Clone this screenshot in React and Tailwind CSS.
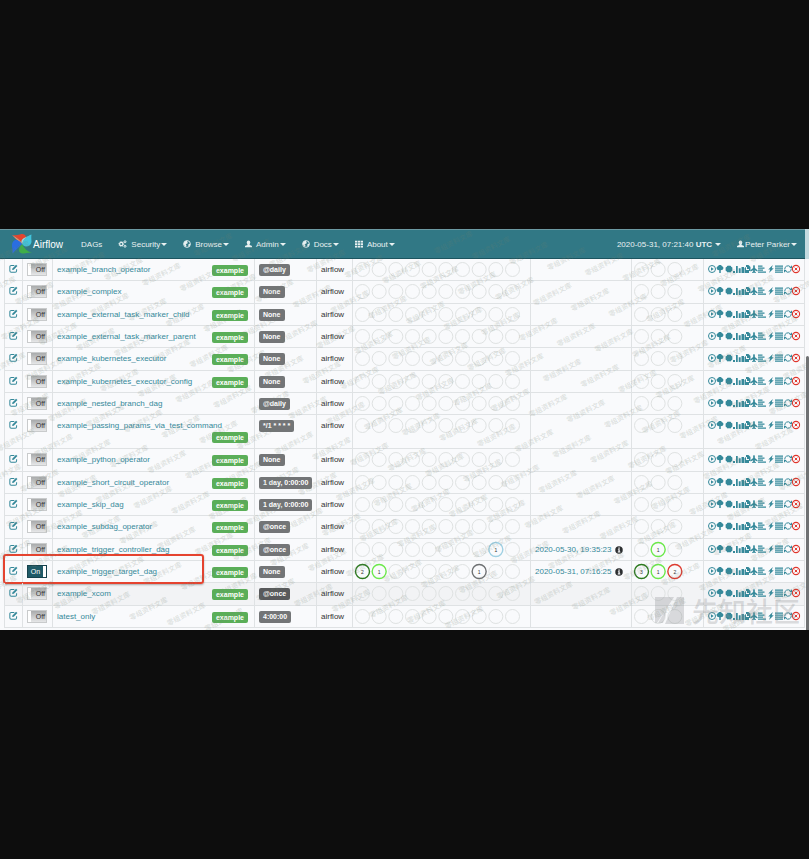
import React from "react";

const DAGS = [
  { name: "example_branch_operator", tag: true, schedule: "@daily" },
  { name: "example_complex", tag: true, schedule: "None" },
  { name: "example_external_task_marker_child", tag: true, schedule: "None" },
  { name: "example_external_task_marker_parent", tag: true, schedule: "None" },
  { name: "example_kubernetes_executor", tag: true, schedule: "None" },
  { name: "example_kubernetes_executor_config", tag: true, schedule: "None" },
  { name: "example_nested_branch_dag", tag: false, schedule: "@daily" },
  { name: "example_passing_params_via_test_command", tag: true, schedule: "*/1 * * * *" },
  { name: "example_python_operator", tag: true, schedule: "None" },
  { name: "example_short_circuit_operator", tag: true, schedule: "1 day, 0:00:00" },
  { name: "example_skip_dag", tag: true, schedule: "1 day, 0:00:00" },
  { name: "example_subdag_operator", tag: true, schedule: "@once" },
  {
    name: "example_trigger_controller_dag",
    tag: true,
    schedule: "@once",
    tasks: { 8: [1, "#9fd0e3"] },
    lastRun: "2020-05-30, 19:35:23",
    runs: { 1: [1, "#6be84a"] },
  },
  {
    name: "example_trigger_target_dag",
    tag: true,
    on: true,
    schedule: "None",
    tasks: { 0: [2, "#2c7a1f"], 1: [1, "#6be84a"], 7: [1, "#6d7072"] },
    lastRun: "2020-05-31, 07:16:25",
    runs: { 0: [3, "#2c7a1f"], 1: [1, "#6be84a"], 2: [2, "#dd3b30"] },
  },
  { name: "example_xcom", tag: true, schedule: "@once", hover: true },
  { name: "latest_only", tag: true, schedule: "4:00:00" },
];

// Every third row takes the extra pixel so that the rows average 22.3px.
const TALLER_ROWS = [1, 4, 8, 11, 14];

function Icon({ children, className = "size-2" }) {
  return (
    <svg viewBox="0 0 16 16" className={`block shrink-0 overflow-visible ${className}`} fill="currentColor" aria-hidden="true">
      {children}
    </svg>
  );
}

const EditIcon = () => (
  <Icon className="size-[9px]">
    <path d="M9.500 2.500H4A2.500 2.500 0 0 0 1.500 5v7A2.500 2.500 0 0 0 4 14.500h7a2.500 2.500 0 0 0 2.500-2.500V9.500" fill="none" stroke="currentColor" strokeWidth="1.800" />
    <path d="M6.200 8 12.500 1.200l2.500 2.500-6.500 6.500-3 .6z" />
  </Icon>
);
const CogsIcon = () => (
  <Icon className="h-2 w-[9px]">
    <circle cx="5.500" cy="8" r="3.300" fill="none" stroke="currentColor" strokeWidth="2.400" />
    <circle cx="5.500" cy="8" r="4.900" fill="none" stroke="currentColor" strokeWidth="1.600" strokeDasharray="1.900 1.950" />
    <circle cx="13" cy="3.500" r="2" fill="none" stroke="currentColor" strokeWidth="1.900" />
    <circle cx="13" cy="12.500" r="2" fill="none" stroke="currentColor" strokeWidth="1.900" />
  </Icon>
);
const GlobeIcon = () => (
  <Icon>
    <circle cx="8" cy="8" r="6.800" fill="none" stroke="currentColor" strokeWidth="1.800" />
    <path d="M2 5 5 2l4-.5-1 2.500 2 1.500-2 2-2.500.5L7 10.500 5.500 14 3 11 1.500 8zM10.500 9l3-1.500 1 1-1.500 4-2 1z" />
  </Icon>
);
const UserIcon = () => (
  <Icon className="h-2 w-[7px]">
    <ellipse cx="8" cy="4.800" rx="4" ry="4.600" />
    <path d="M5.500 8h5v2l4.500 1.800c.7.300 1 1 1 1.700v2H0v-2c0-.7.3-1.400 1-1.700L5.500 10z" />
  </Icon>
);
const GridIcon = () => (
  <Icon>
    {[1.5, 6.5, 11.5].map((y) => [0, 5.7, 11.4].map((x) => <rect key={`${x}-${y}`} x={x} y={y} width="4.600" height="3.600" />))}
  </Icon>
);
const InfoIcon = () => (
  <Icon className="size-2 text-[#2c2e30]">
    <path fillRule="evenodd" d="M8 .5a7.500 7.500 0 1 0 0 15 7.500 7.500 0 0 0 0-15zM6.700 3h2.800v2.300H6.700zM5.800 6.500h3.700v4.700h1.200V13H5.500v-1.800h1.300V8.200h-1z" />
  </Icon>
);

const ACTIONS = [
  ["Trigger Dag", (
    <>
      <circle cx="8" cy="8" r="7" fill="none" stroke="currentColor" strokeWidth="2" />
      <path d="M6 4.600 11.500 8 6 11.400z" />
    </>
  )],
  ["Tree View", <path d="M8 0C5.500 0 4.300 1.300 4 2.500 2.200 3 1 4.500 1.200 6.200c.2 2.700 2.300 4.500 5.300 4.500V16h3v-5.300c3 0 5.100-1.800 5.300-4.500C15 4.500 13.800 3 12 2.500 11.700 1.300 10.500 0 8 0z" />],
  ["Graph View", <path d="m8 .5 1.600 1.700 2.300-.7.600 2.300 2.300.6-.7 2.300L15.800 8l-1.700 1.600.7 2.300-2.300.6-.6 2.300-2.300-.7L8 15.500l-1.600-1.400-2.300.7-.6-2.300-2.300-.6.7-2.300L.2 8l1.700-1.300-.7-2.300 2.300-.6.6-2.300 2.300.7z" />],
  ["Tasks Duration", <path d="M0 12h4v4H0zM6 2h3.500v14H6zM11.500 6.500h3.800V16h-3.800z" />],
  ["Task Tries", <path d="M-1 4h5v12h-5zM5 6l3-2V0h5l4 4v8h-3v4H5zM8 4h2v4h4v2H8z" fillRule="evenodd" />],
  ["Landing Times", <path d="M8 0c1.200 0 1.700 1.500 1.700 3v3L15 10.500v2.300L9.700 10.700v2.500l2 1.500V16L8 15.300 4.300 16v-1.300l2-1.500v-2.500L1 12.800v-2.300L6.300 6V3C6.300 1.500 6.800 0 8 0z" />],
  ["Gantt View", <path d="M0 1h9v2.400H0zM0 5h13v2.400H0zM0 9h10v2.400H0zM0 13h16v2.400H0z" />],
  ["Code View", <path d="M11.500 0 2.500 9h4L4 16 13.500 6.500h-4z" />],
  ["Logs", <path d="M0 1h16v2.500H0zM0 5h16v2.500H0zM0 9h16v2.500H0zM0 13h16v2.500H0z" />],
  ["Refresh", (
    <>
      <path d="M1.500 9A6.500 6.500 0 0 1 12.500 3.500M14.500 7A6.500 6.500 0 0 1 3.500 12.500" fill="none" stroke="currentColor" strokeWidth="2" />
      <path d="M10.500 6H16V.5zM5.500 10H0v5.500z" />
    </>
  )],
  ["Delete Dag", (
    <>
      <circle cx="8" cy="8" r="7.200" fill="none" stroke="currentColor" strokeWidth="2.200" />
      <path d="m5.300 5.300 5.400 5.400m0-5.400-5.400 5.400" fill="none" stroke="currentColor" strokeWidth="1.900" />
    </>
  )],
];

function PinwheelLogo() {
  return (
    <svg viewBox="0 0 40 40" className="size-5 shrink-0" aria-hidden="true">
      <path d="M0 2c6 1 11 0 16-1 6-2 11 0 12 5 1 4 0 8-3 11l-5 3C17 12 10 7 0 2z" fill="#e2452f" />
      <path d="M0 2c10 5 17 10 20 18L8 10z" fill="#f58a68" />
      <path d="M39 1c-1 6 0 10 0 15-1 6-6 9-11 9-3 0-6-2-8-5 2-9 9-15 19-19z" fill="#42c5dd" />
      <path d="M39 1C29 5 22 11 20 20c-3-4-1-9 4-12z" fill="#8be0e8" />
      <path d="M40 38c-6-1-11 0-16 1-6 1-10-2-10-7 0-4 2-8 6-12 4 9 11 15 20 18z" fill="#3fae49" />
      <path d="M1 39c1-6-1-11-1-16 0-6 3-11 8-11 5 0 9 4 12 8C15 25 8 31 1 39z" fill="#2a6ee0" />
    </svg>
  );
}

const Caret = () => (
  <span className="mt-px ml-px size-0 border-x-[3px] border-t-[3px] border-x-transparent border-t-current" aria-hidden="true" />
);

function NavItem({ icon, label, caret = true }) {
  return (
    <a href="#" className="flex items-center whitespace-nowrap">
      {icon && <span className="mr-1">{icon}</span>}
      {label}
      {caret && <Caret />}
    </a>
  );
}

function Navbar() {
  return (
    <nav className="flex h-[30px] items-center justify-between border-t border-b border-t-[#6c9aa3] border-b-[#1d5560] bg-[#317885] pr-2 pl-3 text-[#e8f1f2]">
      <div className="flex items-center gap-4">
        <a href="#" className="mr-[2px] flex items-center gap-px text-[10px] text-white">
          <PinwheelLogo />
          Airflow
        </a>
        <NavItem label="DAGs" caret={false} />
        <NavItem icon={<CogsIcon />} label="Security" />
        <NavItem icon={<GlobeIcon />} label="Browse" />
        <NavItem icon={<UserIcon />} label="Admin" />
        <NavItem icon={<GlobeIcon />} label="Docs" />
        <NavItem icon={<GridIcon />} label="About" />
      </div>
      <div className="flex items-center gap-4">
        <a href="#" className="flex items-center gap-[2px] whitespace-nowrap">
          <span>
            2020-05-31, 07:21:40 <b>UTC</b>
          </span>
          <Caret />
        </a>
        <a href="#" className="flex items-center whitespace-nowrap">
          <span className="mr-px">
            <UserIcon />
          </span>
          Peter Parker
          <Caret />
        </a>
      </div>
    </nav>
  );
}

function Toggle({ on, name }) {
  return (
    <label
      className={`relative flex h-[13px] w-5 cursor-pointer items-center overflow-hidden border text-[7px] leading-[11px] ${
        on
          ? "border-[#17434d] bg-[#1f5a67] text-white"
          : "border-[#c9cbcc] bg-linear-to-b from-[#a9abac] to-[#e6e7e8] text-[#333]"
      }`}
    >
      <input type="checkbox" defaultChecked={on} aria-label={name} className="absolute inset-0 appearance-none" />
      {!on && <span className="h-full w-[3px] bg-white" />}
      <span className={`flex-1 ${on ? "text-center" : "pr-px text-right"}`}>{on ? "On" : "Off"}</span>
      {on && <span className="h-full w-[3px] bg-white" />}
    </label>
  );
}

function StatusCircles({ count, active = {} }) {
  const step = 50 / 3;
  return (
    <svg width={count * 17 + 2} height="17" className="block" role="img" aria-label="Task statuses">
      {Array.from({ length: count }, (_, i) => {
        const state = active[i];
        const cx = 8.5 + i * step;
        return (
          <g key={i}>
            <circle cx={cx} cy="8.500" r="7" fill="none" stroke={state ? state[1] : "#dfe2e2"} strokeWidth={state ? 1.4 : 1} />
            {state && (
              <text x={cx} y="10.500" textAnchor="middle" className="fill-[#333] text-[5px]">
                {state[0]}
              </text>
            )}
          </g>
        );
      })}
    </svg>
  );
}

function DagRow({ dag, index }) {
  const height = dag.name.includes("passing_params")
    ? "h-[34px]"
    : TALLER_ROWS.includes(index)
      ? "h-[23px]"
      : "h-[22px]";
  const cell = "border-r border-b border-[#dfe2e4] p-0 align-top";
  return (
    <tr className={`${height} ${dag.hover ? "bg-[#f2f3f5]" : ""}`}>
      <td className={`${cell} relative border-l`}>
        <a href="#" aria-label={`Edit ${dag.name}`} className="mt-[5px] ml-1 block text-[#35899a]">
          <EditIcon />
        </a>
        {dag.on && (
          <span className="pointer-events-none absolute -top-[7px] -left-[2px] h-[30px] w-[201px] rounded-[3px] border-2 border-[#e5432f] shadow-[0_1px_2px_rgba(0,0,0,0.3)]" />
        )}
      </td>
      <td className={cell}>
        <div className="pt-1 pl-1">
          <Toggle on={dag.on} name={dag.name} />
        </div>
      </td>
      <td className={cell}>
        <div className="flex flex-wrap items-start justify-between pt-[5px] pr-[6px] pl-1">
          <a href="#" className="leading-[11px] text-[#35899a]">
            {dag.name}
          </a>
          {dag.tag && (
            <a href="#" className="mt-px ml-auto rounded-[2px] bg-[#5aae58] px-1 text-[7px] leading-[11px] font-bold text-white">
              example
            </a>
          )}
        </div>
      </td>
      <td className={cell}>
        <div className="flex pt-[5px] pl-1">
          <a
            href="#"
            className={`rounded-[2px] px-1 text-[7px] leading-[12px] font-bold whitespace-nowrap text-white ${
              dag.hover ? "bg-[#58595b]" : "bg-[#737577]"
            }`}
          >
            {dag.schedule}
          </a>
        </div>
      </td>
      <td className={cell}>
        <div className="pt-[5px] pl-1 leading-[11px]">airflow</div>
      </td>
      <td className={cell}>
        <div className="pt-[2px] pl-px">
          <StatusCircles count={10} active={dag.tasks} />
        </div>
      </td>
      <td className={cell}>
        {dag.lastRun && (
          <div className="flex items-center gap-[3px] pt-[5px] pl-1 leading-[11px] whitespace-nowrap">
            <a href="#" className="text-[#35899a]">
              {dag.lastRun}
            </a>
            <InfoIcon />
          </div>
        )}
      </td>
      <td className={cell}>
        <div className="pt-[2px] pl-px">
          <StatusCircles count={3} active={dag.runs} />
        </div>
      </td>
      <td className={cell}>
        <div className="flex justify-between pt-[6px] pr-1 pl-1 text-[#35899a]">
          {ACTIONS.map(([label, shape]) => (
            <a key={label} href="#" aria-label={label} className={label === "Delete Dag" ? "text-[#e0352b]" : ""}>
              <Icon>{shape}</Icon>
            </a>
          ))}
        </div>
      </td>
    </tr>
  );
}

// Small slanted marks on a skewed lattice, spread over the whole panel.
function TiledWatermark() {
  const marks = [];
  for (let j = -8; j <= 8; j++) {
    for (let i = -18; i <= 12; i++) {
      const x = 548.3 + i * 37.7 - j * 14;
      const y = 177 + i * 5.5 + j * 35.3;
      if (x > -5 && x < 806 && y > 12 && y < 394) marks.push([x, y]);
    }
  }
  return (
    <svg className="pointer-events-none absolute inset-0 size-full" aria-hidden="true">
      {marks.map(([x, y]) => (
        <text
          key={`${x}-${y}`}
          transform={`translate(${x} ${y}) rotate(-27)`}
          y="2"
          textAnchor="middle"
          className="fill-[#6f7f6f]/20 font-['Noto_Sans_CJK_SC',sans-serif] text-[7px] font-bold"
        >
          零组资料文库
        </text>
      ))}
    </svg>
  );
}

function SiteWatermark() {
  return (
    <div className="pointer-events-none absolute right-[9px] bottom-[6px] flex items-center gap-2 text-[#8b8e91]/30" aria-hidden="true">
      <svg viewBox="0 0 29 27" className="h-[27px] w-[29px]" fill="currentColor">
        <path d="M0 0h19L2 26H0z" />
        <path d="M22 0h7v27H10z" />
        <path d="M13 9 3 26h5z" />
      </svg>
      <span className="font-['Noto_Sans_CJK_SC',sans-serif] text-[27px] leading-[27px] font-medium">先知社区</span>
    </div>
  );
}

export default function App() {
  return (
    <div className="min-h-screen bg-[#0d0d0d] pt-[229px] font-['Liberation_Sans',Arial,sans-serif] text-[8px] leading-[11px] text-[#333]">
      <div className="relative flex overflow-hidden bg-[#f9fafc]">
        <main className="min-w-0 flex-1">
          <Navbar />
          <div className="pb-[2px] pl-1">
            <table className="w-full table-fixed border-separate border-spacing-0">
              <colgroup>
                <col className="w-[19px]" />
                <col className="w-[30px]" />
                <col />
                <col className="w-[62px]" />
                <col className="w-[36px]" />
                <col className="w-[178px]" />
                <col className="w-[101px]" />
                <col className="w-[72px]" />
                <col className="w-[101px]" />
              </colgroup>
              <tbody>
                {DAGS.map((dag, index) => (
                  <DagRow key={dag.name} dag={dag} index={index} />
                ))}
              </tbody>
            </table>
          </div>
        </main>
        <div className="flex w-1 flex-col items-end">
          <div className="h-[30px] w-full bg-[#c3dbe0]" />
          <div className="mt-[97px] w-[3px] flex-1 rounded-t-full bg-[#6f7173]" />
        </div>
        <TiledWatermark />
        <SiteWatermark />
      </div>
    </div>
  );
}
